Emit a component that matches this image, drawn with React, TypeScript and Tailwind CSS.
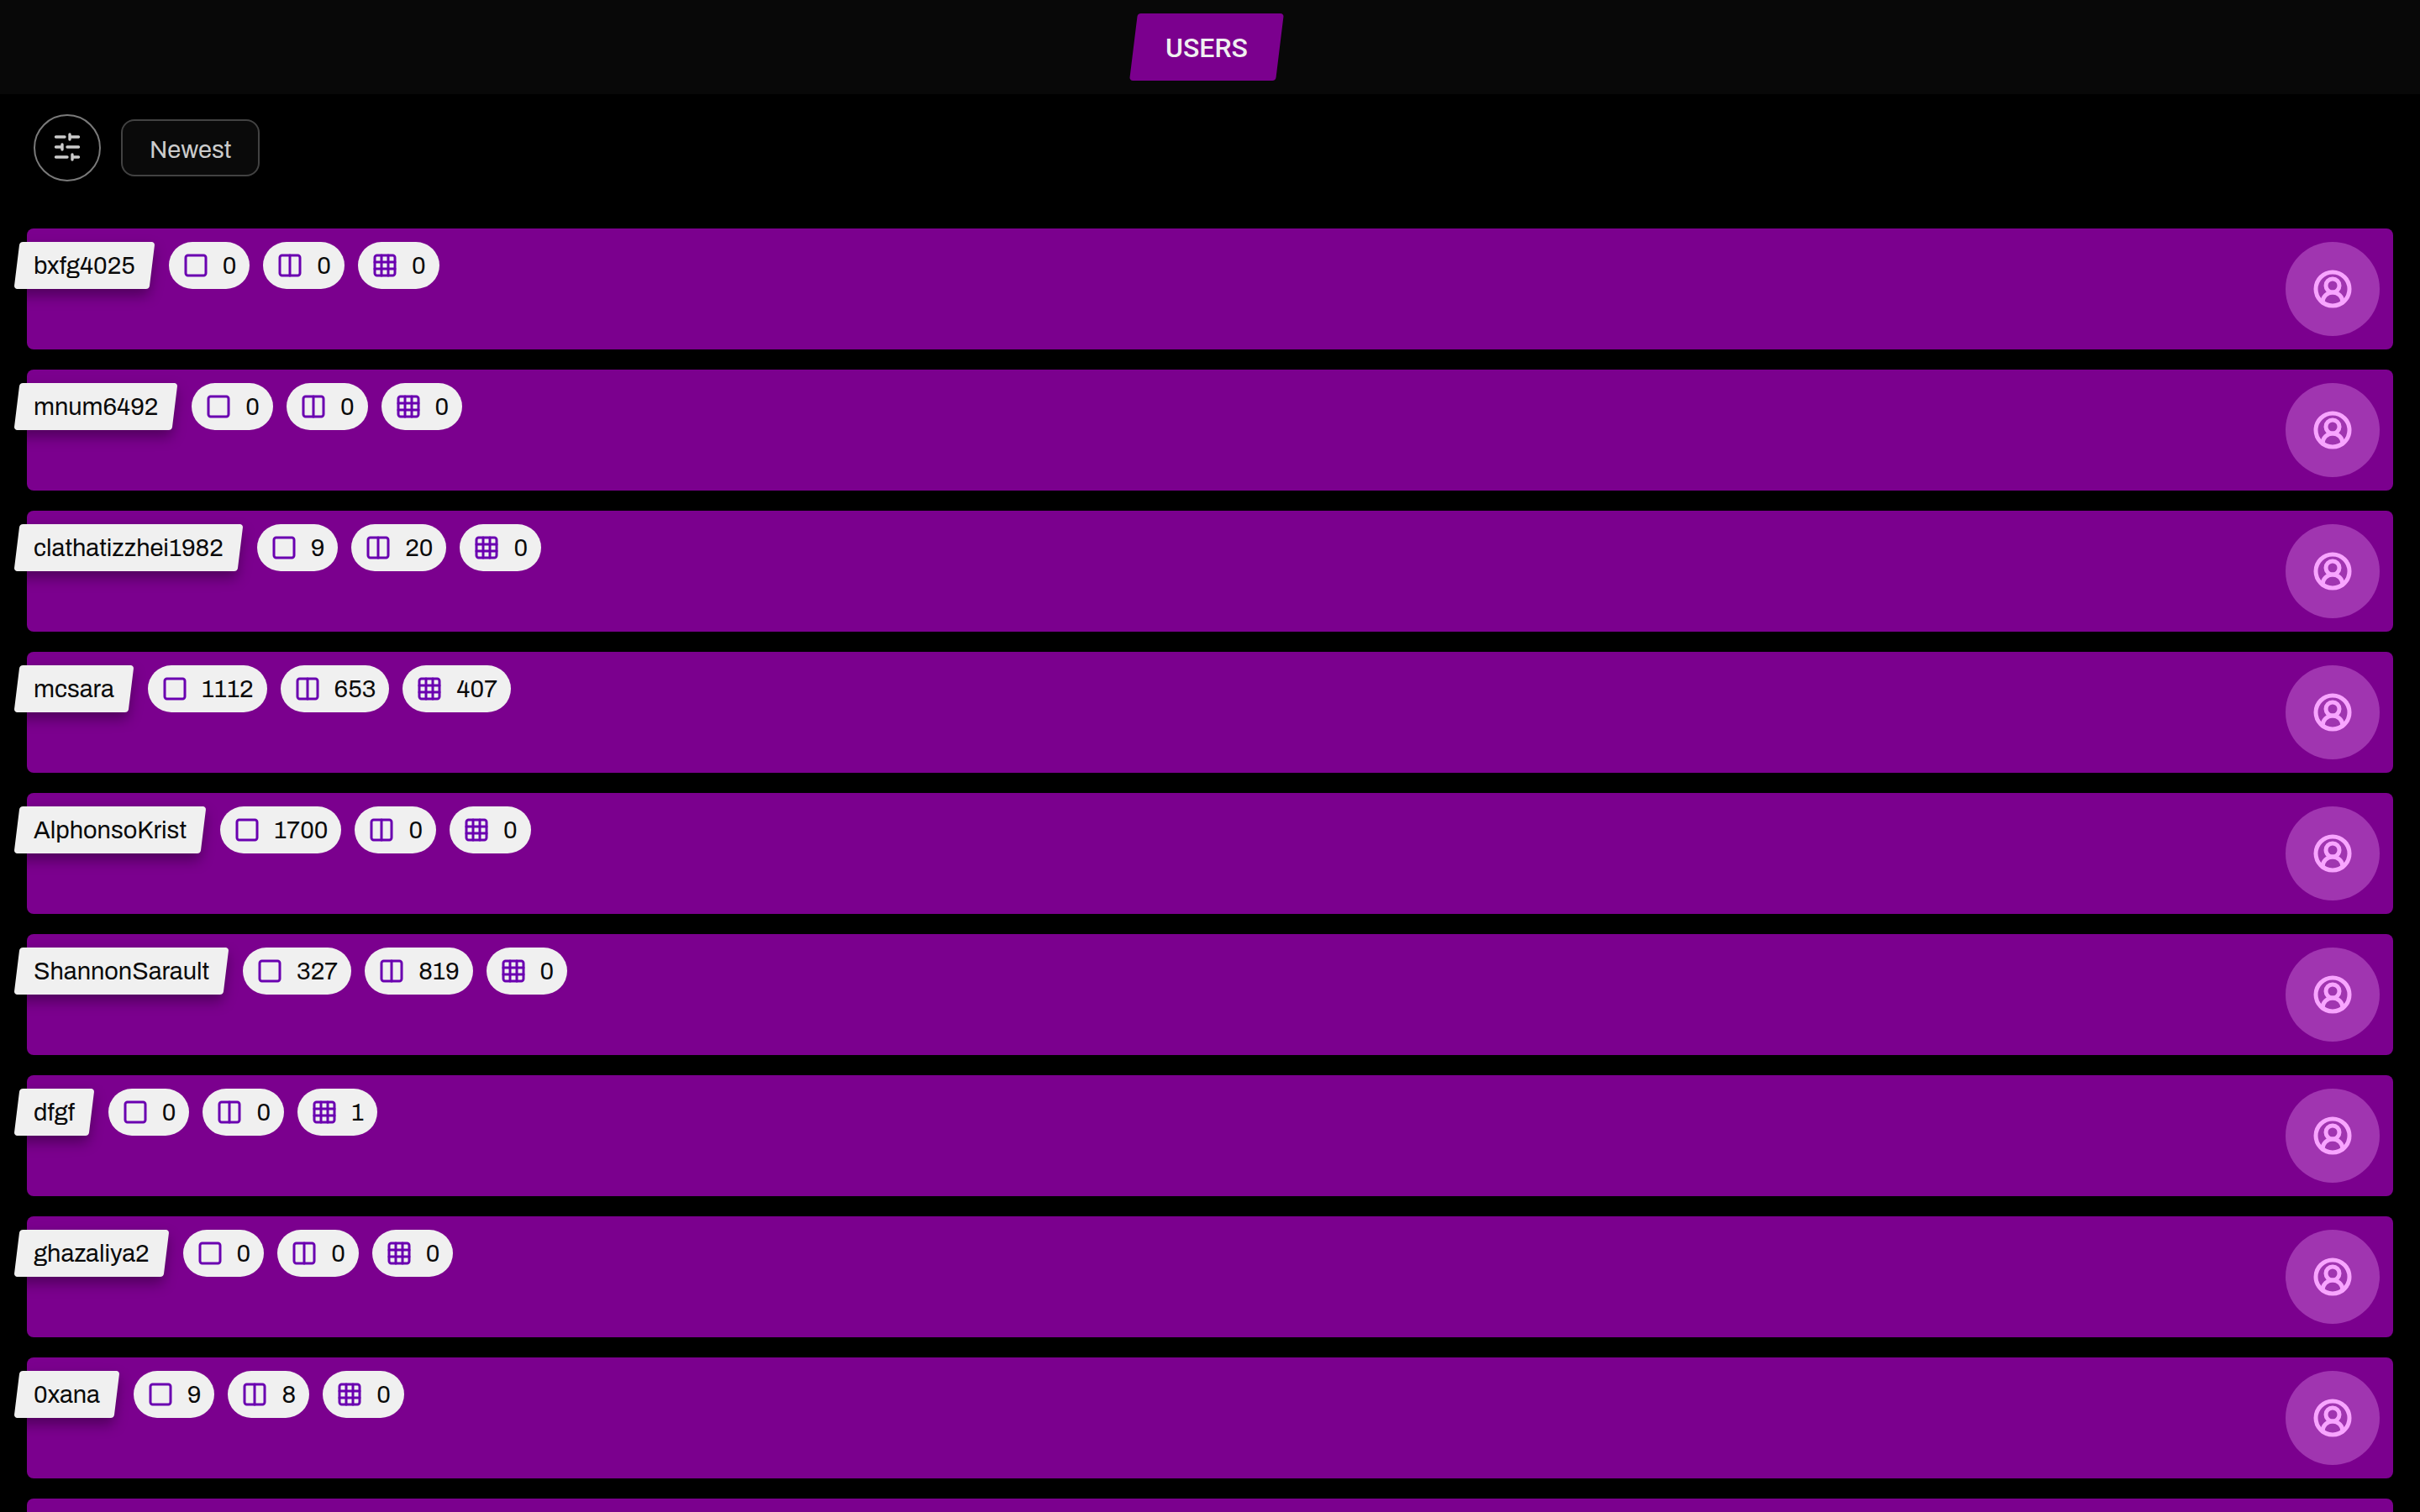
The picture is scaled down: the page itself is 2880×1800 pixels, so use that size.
import React from "react";
import { CircleUserRound, Columns2, Grid3x3, Square } from "lucide-react";

const users: { name: string; counts: [number, number, number] }[] = [
  { name: "bxfg4025", counts: [0, 0, 0] },
  { name: "mnum6492", counts: [0, 0, 0] },
  { name: "clathatizzhei1982", counts: [9, 20, 0] },
  { name: "mcsara", counts: [1112, 653, 407] },
  { name: "AlphonsoKrist", counts: [1700, 0, 0] },
  { name: "ShannonSarault", counts: [327, 819, 0] },
  { name: "dfgf", counts: [0, 0, 1] },
  { name: "ghazaliya2", counts: [0, 0, 0] },
  { name: "0xana", counts: [9, 8, 0] },
];

const statIcons = [Square, Columns2, Grid3x3];

function FilterIcon() {
  return (
    <svg
      viewBox="0 0 24 24"
      className="size-9"
      fill="none"
      stroke="currentColor"
      strokeWidth="2.25"
      strokeLinecap="round"
      aria-hidden="true"
    >
      <path d="M21 4h-7M10 4H3M21 12h-9M8 12H3M21 20h-5M12 20H3M14 2v4M8 10v4M16 18v4" />
    </svg>
  );
}

function Avatar() {
  return (
    <span className="flex size-28 items-center justify-center rounded-full bg-[#a035b0] text-[#f8a5ff]">
      <CircleUserRound size={48} strokeWidth={2.5} />
    </span>
  );
}

function UserCard({ name, counts }: { name: string; counts: number[] }) {
  return (
    <li className="flex items-start justify-between rounded-lg bg-[#7b008e] p-4">
      <div className="-ml-7 flex items-center gap-4">
        <a href="#" className="relative mr-1 flex h-14 items-center px-5 pt-0.5 text-[29px] leading-8">
          <span className="absolute inset-0 -skew-x-[7deg] rounded-sm bg-[#f0f0f0] shadow-[0_8px_16px_rgba(0,0,0,0.35)]" />
          <span className="relative">{name}</span>
        </a>
        {counts.map((count, i) => {
          const Icon = statIcons[i];
          return (
            <span key={i} className="flex h-14 items-center gap-4 rounded-full bg-[#f0f0f0] px-4 text-[29px] leading-8">
              <Icon size={32} strokeWidth={2.25} className="text-[#6a00b0]" />
              <span className="pt-0.5">{count}</span>
            </span>
          );
        })}
      </div>
      <Avatar />
    </li>
  );
}

export default function App() {
  return (
    <div className="h-screen overflow-hidden bg-black font-['Archivo','Liberation_Sans',sans-serif] text-[#0a0a0a]">
      <header className="flex justify-center bg-[#080808] p-4">
        <a
          href="#"
          className="relative -ml-2 flex h-20 items-center px-[38px] pt-0.5 font-['Roboto',sans-serif] text-[32px] leading-10 font-medium text-[#f0f0f0]"
        >
          <span className="absolute inset-0 -skew-x-[7deg] rounded-sm bg-[#7b008e]" />
          <span className="relative">USERS</span>
        </a>
      </header>
      <div className="flex items-center gap-6 px-10 pt-6">
        <button
          aria-label="Filters"
          className="flex size-20 items-center justify-center rounded-full border-2 border-[#7a7a7a] pb-0.5 text-[#cccccc]"
        >
          <FilterIcon />
        </button>
        <button className="h-17 rounded-2xl border-2 border-[#424242] bg-[#0a0a0a] px-8 pt-1.5 text-[29px] leading-8 text-[#cccccc]">
          Newest
        </button>
      </div>
      <ul className="flex flex-col gap-6 px-8 pt-14">
        {users.map((user) => (
          <UserCard key={user.name} {...user} />
        ))}
        <li className="h-36 rounded-lg bg-[#7b008e]" />
      </ul>
    </div>
  );
}
